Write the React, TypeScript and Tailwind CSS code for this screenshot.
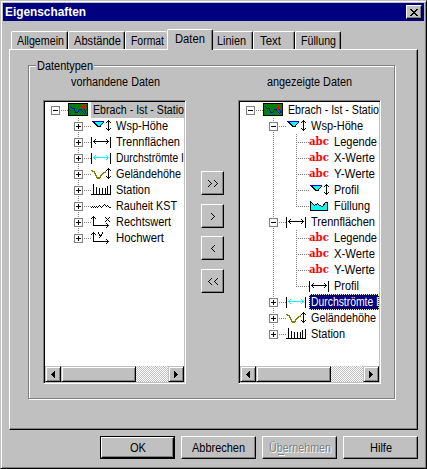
import { useLayoutEffect, useRef, useState } from 'react';
import type { ReactNode } from 'react';

/** Single line of text condensed or widened horizontally to fill `w` pixels. */
function Fit({ w, children, className = '' }: { w: number; children: string; className?: string }) {
  const ref = useRef<HTMLSpanElement>(null);
  const [scale, setScale] = useState(1);
  useLayoutEffect(() => {
    if (ref.current) setScale(w / parseFloat(getComputedStyle(ref.current).width));
  }, [w, children]);
  return (
    <span className="inline-block shrink-0 align-top" style={{ width: w }}>
      <span ref={ref} className={`inline-block origin-left align-top whitespace-pre ${className}`} style={{ transform: `scaleX(${scale})` }}>
        {children}
      </span>
    </span>
  );
}

type IconName = 'map' | 'level' | 'span' | 'flow' | 'terrain' | 'station' | 'rough' | 'xaxis' | 'yaxis' | 'abc' | 'fill';

const UpDown = () => <path d="M17.5 2v11M16 3.5h3M16 11.5h3M15 4.5h1M19 4.5h1M15 10.5h1M19 10.5h1" stroke="#000" />;

function Span({ color }: { color: string }) {
  return (
    <>
      <path d="M.5 3v11M19.5 3v11" stroke="#000" />
      <path d="M2 7.5h16M3 6.5h1M3 8.5h1M4 5.5h1M4 9.5h1M16 6.5h1M16 8.5h1M15 5.5h1M15 9.5h1" stroke={color} />
    </>
  );
}

function Icon({ name }: { name: IconName }) {
  if (name === 'abc') {
    return (
      <span className="flex h-4 w-5 shrink-0 items-start pt-px font-['DejaVu_Serif',serif] text-[11px] leading-[14px] font-bold text-[#ff0000]">
        <Fit w={20}>abc</Fit>
      </span>
    );
  }
  const art: Record<Exclude<IconName, 'abc'>, ReactNode> = {
    map: (
      <>
        <path d="M.5 1.5h19v12h-19z" fill="#008000" stroke="#000" />
        <path d="M14 3h3v4h-1v1h-1v-2h-1z" fill="#ff0000" />
        <path d="M2 4.5h1M3 5.5h1M4 6.5h3M6.5 7v2M7.5 9v2M8 10.5h2M10.5 8v2M11 7.5h3M13.5 8v1M14.5 9v1M15.5 10v1M16 11.5h1M17.5 8v3M16 7.5h1" stroke="#0000ff" />
      </>
    ),
    level: (
      <>
        <path d="M3 4h9v1h-1v1h-1v1H6V6H5V5H3z" fill="#00ffff" />
        <path d="M2 3.5h11" stroke="#0000ff" />
        <path d="M1 3.5h1M2 4.5h2M3 5.5h2M4 6.5h2M5 7.5h2M6 8.5h4M9 7.5h1M10 6.5h1M11 5.5h1M12 4.5h1" stroke="#000" />
        <path d="M7 7.5h2" stroke="#00ffff" />
        <UpDown />
      </>
    ),
    span: <Span color="#000" />,
    flow: <Span color="#00ffff" />,
    terrain: (
      <>
        <path d="M0 4.5l3 1 2 4 1.5 2.5h2l2-3.5 2.5-2 2-.5" stroke="#808000" strokeWidth="1.4" fill="none" />
        <UpDown />
      </>
    ),
    station: <path d="M0 12.5h20M2.5 2v10M5.5 5v7M8.5 6v6M11.5 6v6M14.5 6v6M16.5 4v8M19.5 3v9" stroke="#000" />,
    rough: <path d="M0 9.5h1M1 8.5h1M2 9.5h1M3 8.5h1M4 9.5h1M5 8.5h1M6 9.5h1M7 8.5h1M8 7.5h1M9 8.5h1M10 9.5h1M11 8.5h1M12 7.5h1M13 6.5h1M14 7.5h1M15 8.5h1M16 7.5h1M17 8.5h1M18 9.5h2" stroke="#000" />,
    xaxis: (
      <path d="M2.5 2v9M2 11.5h16M1 3.5h3M0 4.5h1M4 4.5h1M15 9.5h1M16 10.5h1M16 12.5h1M15 13.5h1M14 3.5h1M18 3.5h1M15 4.5h1M17 4.5h1M16 5.5h1M15 6.5h1M17 6.5h1M14 7.5h1M18 7.5h1" stroke="#000" />
    ),
    yaxis: (
      <path d="M2.5 2v9M2 11.5h16M1 3.5h3M0 4.5h1M4 4.5h1M15 9.5h1M16 10.5h1M16 12.5h1M15 13.5h1M7.5 2v2M11.5 2v2M8.5 4v2M10.5 4v2M9.5 5v2M8 7.5h1" stroke="#000" />
    ),
    fill: <path d="M1.5 12.5v-9l2 2 2 2 3-2 2 2 3 1 3-4h2v8z" fill="#00ffff" stroke="#000" />,
  };
  return (
    <svg width="20" height="16" viewBox="0 0 20 16" fill="none" shapeRendering="crispEdges" className="shrink-0">
      {art[name]}
    </svg>
  );
}

/** Connector cell of a tree row: dotted guide lines plus an optional +/- box. */
function Branch({ line, arm, box }: { line: 'none' | 'full' | 'half'; arm?: boolean; box?: '+' | '-' }) {
  return (
    <svg width="23" height="16" viewBox="0 0 23 16" shapeRendering="crispEdges" className="shrink-0">
      {line !== 'none' && <path d={line === 'full' ? 'M10.5 0v16' : 'M10.5 0v9'} stroke="#808080" strokeDasharray="1 1" />}
      {arm && <path d="M10 8.5h13" stroke="#808080" strokeDasharray="1 1" />}
      {box && (
        <>
          <path d="M6.5 4.5h8v8h-8z" fill="#fff" stroke="#808080" />
          <path d={box === '+' ? 'M8 8.5h5M10.5 6v5' : 'M8 8.5h5'} stroke="#000" />
        </>
      )}
    </svg>
  );
}

type Node = { depth: number; icon: IconName; text: string; w: number; box?: '+' | '-'; last?: boolean; mark?: 'gray' | 'navy' };

function Row({ n }: { n: Node }) {
  const mark =
    n.mark === 'gray'
      ? 'bg-[#c0c0c0]'
      : n.mark === 'navy'
        ? 'bg-[#000080] text-white outline-1 -outline-offset-1 outline-dotted outline-[#ffff80]'
        : '';
  return (
    <div className="flex h-4 shrink-0">
      {n.depth > 0 && <Branch line="none" />}
      {n.depth > 1 && <Branch line="full" />}
      <Branch line={n.depth === 0 ? 'none' : n.last ? 'half' : 'full'} arm box={n.box} />
      <Icon name={n.icon} />
      <div className={`ml-[3px] flex h-4 grow items-center pl-0.5 ${mark}`}>
        <Fit w={n.w}>{n.text}</Fit>
      </div>
    </div>
  );
}

const available: Node[] = [
  { depth: 0, icon: 'map', text: 'Ebrach - Ist - Statio', w: 91, box: '-', mark: 'gray' },
  { depth: 1, icon: 'level', text: 'Wsp-Höhe', w: 52, box: '+' },
  { depth: 1, icon: 'span', text: 'Trennflächen', w: 64, box: '+' },
  { depth: 1, icon: 'flow', text: 'Durchströmte I', w: 68, box: '+' },
  { depth: 1, icon: 'terrain', text: 'Geländehöhe', w: 65, box: '+' },
  { depth: 1, icon: 'station', text: 'Station', w: 34, box: '+' },
  { depth: 1, icon: 'rough', text: 'Rauheit KST', w: 61, box: '+' },
  { depth: 1, icon: 'xaxis', text: 'Rechtswert', w: 55, box: '+' },
  { depth: 1, icon: 'yaxis', text: 'Hochwert', w: 48, box: '+', last: true },
];

const shown: Node[] = [
  { depth: 0, icon: 'map', text: 'Ebrach - Ist - Statio', w: 91, box: '-' },
  { depth: 1, icon: 'level', text: 'Wsp-Höhe', w: 52, box: '-' },
  { depth: 2, icon: 'abc', text: 'Legende', w: 43 },
  { depth: 2, icon: 'abc', text: 'X-Werte', w: 41 },
  { depth: 2, icon: 'abc', text: 'Y-Werte', w: 41 },
  { depth: 2, icon: 'level', text: 'Profil', w: 25 },
  { depth: 2, icon: 'fill', text: 'Füllung', w: 36, last: true },
  { depth: 1, icon: 'span', text: 'Trennflächen', w: 64, box: '-' },
  { depth: 2, icon: 'abc', text: 'Legende', w: 43 },
  { depth: 2, icon: 'abc', text: 'X-Werte', w: 41 },
  { depth: 2, icon: 'abc', text: 'Y-Werte', w: 41 },
  { depth: 2, icon: 'span', text: 'Profil', w: 25, last: true },
  { depth: 1, icon: 'flow', text: 'Durchströmte I', w: 68, box: '+', mark: 'navy' },
  { depth: 1, icon: 'terrain', text: 'Geländehöhe', w: 65, box: '+' },
  { depth: 1, icon: 'station', text: 'Station', w: 34, box: '+', last: true },
];

const scrollPiece =
  'flex h-4 shrink-0 items-center justify-center border border-t-[#c0c0c0] border-l-[#c0c0c0] border-r-black border-b-black bg-[#c0c0c0] shadow-[inset_1px_1px_0_#fff,inset_-1px_-1px_0_#808080]';

function Tree({ nodes }: { nodes: Node[] }) {
  return (
    <div className="flex h-[284px] w-[143px] flex-col border border-t-[#808080] border-l-[#808080] border-r-white border-b-white p-px shadow-[inset_1px_1px_0_#000,inset_-1px_-1px_0_#c0c0c0]">
      <div className="flex grow flex-col overflow-hidden bg-white">
        {nodes.map((n, i) => (
          <Row key={i} n={n} />
        ))}
      </div>
      <div className="flex h-4 shrink-0 bg-[repeating-conic-gradient(#fff_0_25%,#c0c0c0_0_50%)] bg-[length:2px_2px]">
        <div className={`w-4 ${scrollPiece}`}>
          <svg width="4" height="7" shapeRendering="crispEdges">
            <path d="M3 0h1v7h-1v-1h-1v-1h-1v-1h-1v-1h1v-1h1v-1h1z" />
          </svg>
        </div>
        <div className={`w-[75px] ${scrollPiece}`} />
        <div className={`ml-auto w-4 ${scrollPiece}`}>
          <svg width="4" height="7" shapeRendering="crispEdges">
            <path d="M0 0h1v1h1v1h1v1h1v1h-1v1h-1v1h-1v1h-1z" />
          </svg>
        </div>
      </div>
    </div>
  );
}

const raised = 'border border-t-white border-l-white border-r-black border-b-black bg-[#c0c0c0] shadow-[inset_-1px_-1px_0_#808080]';

function Chevron({ dir, x }: { dir: 'l' | 'r'; x: number }) {
  return (
    <path
      transform={`translate(${x} 0)`}
      d={dir === 'r' ? 'M0 .5h1M1 1.5h1M2 2.5h1M3 3.5h1M2 4.5h1M1 5.5h1M0 6.5h1' : 'M3 .5h1M2 1.5h1M1 2.5h1M0 3.5h1M1 4.5h1M2 5.5h1M3 6.5h1'}
      stroke="#000"
    />
  );
}

function MoveButton({ dir, twice, className = '' }: { dir: 'l' | 'r'; twice?: boolean; className?: string }) {
  return (
    <button className={`flex h-6 w-[23px] items-center justify-center ${raised} ${className}`}>
      <svg width={twice ? 10 : 4} height="7" shapeRendering="crispEdges">
        <Chevron dir={dir} x={0} />
        {twice && <Chevron dir={dir} x={6} />}
      </svg>
    </button>
  );
}

function Tab({ text, w, className }: { text: string; w: number; className: string }) {
  return (
    <div className={`rounded-t-[2px] border-t border-white pt-0.5 ${className}`}>
      <Fit w={w}>{text}</Fit>
    </div>
  );
}

const tabLeft = 'border-l border-l-white';
const tabRight = 'border-r border-r-black shadow-[inset_-1px_0_0_#808080]';

export default function App() {
  return (
    <div className="flex h-[469px] w-[427px] flex-col overflow-hidden border border-t-[#c0c0c0] border-l-[#c0c0c0] border-r-black border-b-black bg-[#c0c0c0] p-0.5 font-['Liberation_Sans',sans-serif] text-[12.5px] leading-[14px] text-black shadow-[inset_1px_1px_0_#fff,inset_-1px_-1px_0_#808080]">
      <div className="flex h-[18px] shrink-0 items-center justify-between bg-[#000080] pr-0.5 pl-0.5 text-[12px] font-bold text-white">
        <Fit w={81}>Eigenschaften</Fit>
        <button className={`flex h-[14px] w-4 items-center justify-center ${raised}`}>
          <svg width="8" height="7" shapeRendering="crispEdges">
            <path d="M0 .5h2M6 .5h2M1 1.5h2M5 1.5h2M2 2.5h4M3 3.5h2M2 4.5h4M1 5.5h2M5 5.5h2M0 6.5h2M6 6.5h2" stroke="#000" />
          </svg>
        </button>
      </div>

      <div className="z-10 mt-2 ml-2 flex h-5 shrink-0 items-end">
        <Tab text="Allgemein" w={47} className={`h-[18px] w-[57px] pl-[5px] ${tabLeft} ${tabRight}`} />
        <Tab text="Abstände" w={47} className={`h-[18px] w-[57px] pl-[5px] ${tabLeft} ${tabRight}`} />
        <Tab text="Format" w={33} className={`h-[18px] w-[42px] pl-[5px] ${tabLeft}`} />
        <Tab text="Daten" w={30} className={`-mb-px h-[21px] w-[46px] bg-[#c0c0c0] pl-[7px] ${tabLeft} ${tabRight}`} />
        <Tab text="Linien" w={29} className={`h-[18px] w-10 pl-1 ${tabRight}`} />
        <Tab text="Text" w={21} className={`h-[18px] w-[42px] pl-1.5 ${tabLeft} ${tabRight}`} />
        <Tab text="Füllung" w={35} className={`h-[18px] w-[46px] pl-[5px] ${tabLeft} ${tabRight}`} />
      </div>

      <div className={`ml-1.5 h-[381px] w-[409px] shrink-0 pt-[15px] pl-[18px] ${raised}`}>
        <div className="h-[334px] w-[367px] border border-[#808080] shadow-[1px_1px_0_#fff,inset_1px_1px_0_#fff]">
          <div className="-mt-[7px] ml-[7px] h-4 w-[58px] bg-[#c0c0c0] pl-px">
            <Fit w={56}>Datentypen</Fit>
          </div>
          <div className="flex pl-[14px]">
            <div className="w-[143px]">
              <div className="h-[25px] pl-7">
                <Fit w={89}>vorhandene Daten</Fit>
              </div>
              <Tree nodes={available} />
            </div>
            <div className="ml-[15px] flex w-[23px] flex-col pt-24">
              <MoveButton dir="r" twice />
              <MoveButton dir="r" className="mt-[9px]" />
              <MoveButton dir="l" className="mt-2" />
              <MoveButton dir="l" twice className="mt-[9px]" />
            </div>
            <div className="ml-[14px] w-[143px]">
              <div className="h-[25px] pl-[29px]">
                <Fit w={85}>angezeigte Daten</Fit>
              </div>
              <Tree nodes={shown} />
            </div>
          </div>
        </div>
      </div>

      <div className="mt-1.5 ml-[97px] flex h-[23px] shrink-0">
        <button className="h-[23px] w-[75px] border border-black">
          <div className={`flex h-[21px] w-[73px] items-center justify-center ${raised}`}>
            <Fit w={16}>OK</Fit>
          </div>
        </button>
        <button className={`ml-1.5 flex h-[23px] w-[75px] items-center justify-center ${raised}`}>
          <Fit w={53}>Abbrechen</Fit>
        </button>
        <button disabled className={`relative ml-1.5 flex h-[23px] w-[75px] items-center justify-center text-[#808080] ${raised}`}>
          <Fit w={62} className="[text-shadow:1px_1px_0_#fff]">
            Übernehmen
          </Fit>
          <span className="absolute top-[17px] left-[15px] h-px w-1.5 bg-[#808080] shadow-[1px_1px_0_#fff]" />
        </button>
        <button className={`ml-1.5 flex h-[23px] w-[75px] items-center justify-center ${raised}`}>
          <Fit w={22}>Hilfe</Fit>
        </button>
      </div>
    </div>
  );
}
